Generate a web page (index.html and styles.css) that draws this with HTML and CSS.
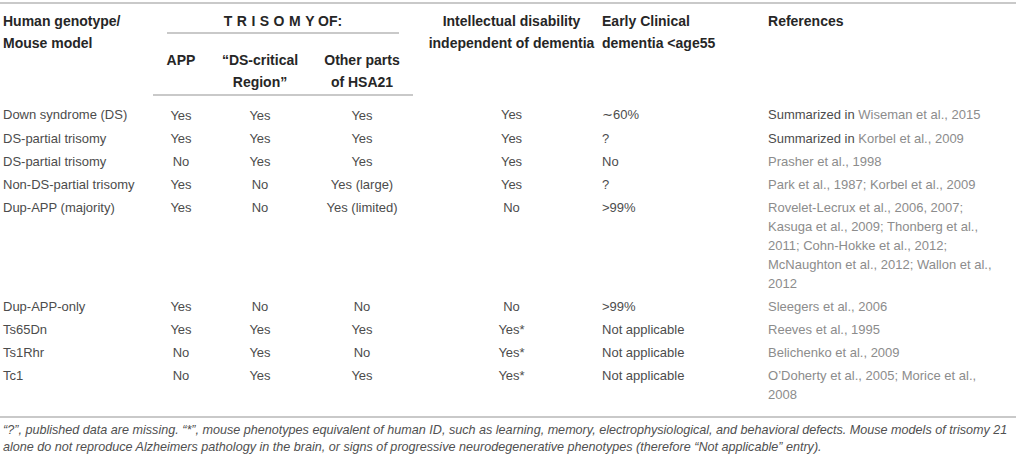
FILE: index.html
```html
<!DOCTYPE html>
<html lang="en">
<head>
  <meta charset="UTF-8">
  <title>Trisomy 21 genotypes and mouse models</title>
  <link rel="stylesheet" href="styles.css">
</head>
<body>
  <table class="trisomy">
    <colgroup>
      <col class="c-model">
      <col class="c-app">
      <col class="c-dscr">
      <col class="c-other">
      <col class="c-id">
      <col class="c-early">
      <col class="c-refs">
    </colgroup>
    <thead>
      <tr class="head-top">
        <th rowspan="2" class="left">Human genotype/<br>Mouse model</th>
        <th colspan="3" class="group"><div class="group-line"><span class="spaced">TRISOM</span>Y OF:</div></th>
        <th rowspan="2" class="idcol">Intellectual disability<br>independent of dementia</th>
        <th rowspan="2" class="left">Early Clinical<br>dementia &lt;age55</th>
        <th rowspan="2" class="left refs">References</th>
      </tr>
      <tr class="head-sub">
        <th>APP</th>
        <th>“DS-critical<br>Region”</th>
        <th>Other parts<br>of HSA21</th>
      </tr>
    </thead>
    <tbody>
      <tr>
        <td>Down syndrome (DS)</td><td>Yes</td><td>Yes</td><td>Yes</td><td class="idcol">Yes</td><td>∼60%</td>
        <td class="refs"><span class="dark">Summarized in</span> Wiseman et al., 2015</td>
      </tr>
      <tr>
        <td>DS-partial trisomy</td><td>Yes</td><td>Yes</td><td>Yes</td><td class="idcol">Yes</td><td>?</td>
        <td class="refs"><span class="dark">Summarized in</span> Korbel et al., 2009</td>
      </tr>
      <tr>
        <td>DS-partial trisomy</td><td>No</td><td>Yes</td><td>Yes</td><td class="idcol">Yes</td><td>No</td>
        <td class="refs">Prasher et al., 1998</td>
      </tr>
      <tr>
        <td>Non-DS-partial trisomy</td><td>Yes</td><td>No</td><td>Yes (large)</td><td class="idcol">Yes</td><td>?</td>
        <td class="refs">Park et al., 1987; Korbel et al., 2009</td>
      </tr>
      <tr>
        <td>Dup-APP (majority)</td><td>Yes</td><td>No</td><td>Yes (limited)</td><td class="idcol">No</td><td>&gt;99%</td>
        <td class="refs">Rovelet-Lecrux et al., 2006, 2007; Kasuga et al., 2009; Thonberg et al., 2011; Cohn-Hokke et al., 2012; McNaughton et al., 2012; Wallon et al., 2012</td>
      </tr>
      <tr>
        <td>Dup-APP-only</td><td>Yes</td><td>No</td><td>No</td><td class="idcol">No</td><td>&gt;99%</td>
        <td class="refs">Sleegers et al., 2006</td>
      </tr>
      <tr>
        <td>Ts65Dn</td><td>Yes</td><td>Yes</td><td>Yes</td><td class="idcol">Yes*</td><td>Not applicable</td>
        <td class="refs">Reeves et al., 1995</td>
      </tr>
      <tr>
        <td>Ts1Rhr</td><td>No</td><td>Yes</td><td>No</td><td class="idcol">Yes*</td><td>Not applicable</td>
        <td class="refs">Belichenko et al., 2009</td>
      </tr>
      <tr>
        <td>Tc1</td><td>No</td><td>Yes</td><td>Yes</td><td class="idcol">Yes*</td><td>Not applicable</td>
        <td class="refs">O’Doherty et al., 2005; Morice et al., 2008</td>
      </tr>
    </tbody>
  </table>

  <p class="note">“?”, published data are missing. “*”, mouse phenotypes equivalent of human ID, such as learning, memory, electrophysiological, and behavioral defects. Mouse models of trisomy 21<br>alone do not reproduce Alzheimers pathology in the brain, or signs of progressive neurodegenerative phenotypes (therefore “Not applicable” entry).</p>
</body>
</html>
```

FILE: styles.css
```css
body {
  margin: 0;
  padding-top: 2px;
  background: #fff;
  font-family: "Liberation Sans", Arial, sans-serif;
  color: #4c4c4c;
}

.trisomy {
  width: 1016px;
  table-layout: fixed;
  border-collapse: collapse;
  border-top: 2px solid #c9c9c9;
  border-bottom: 2px solid #c9c9c9;
  font-size: 13px;
}

.c-model { width: 153px; }
.c-app { width: 56px; }
.c-dscr { width: 102px; }
.c-other { width: 102px; }
.c-id { width: 189px; }
.c-early { width: 166px; }
.c-refs { width: 248px; }

/* header */
th {
  font-size: 14px;
  font-weight: bold;
  color: #262626;
  line-height: 22px;
  padding: 0;
  text-align: center;
  vertical-align: top;
}
th.left { text-align: left; }
thead tr:last-child th { border-bottom: 2px solid #c9c9c9; }
.head-top th { padding-top: 6px; }
.head-top th:first-child { padding-left: 3px; }
.head-sub th { padding-top: 15px; padding-bottom: 1px; }
.group-line {
  margin: 0 14px;
  border-bottom: 2px solid #c9c9c9;
}
.spaced { letter-spacing: 0.32em; }
th.idcol { padding-left: 8px; }

/* body */
td {
  line-height: 19px;
  padding: 2px 0;
  text-align: center;
  vertical-align: top;
}
td:first-child { text-align: left; padding-left: 3px; }
td:nth-child(6), td:nth-child(7) { text-align: left; }
td.idcol { padding-left: 8px; }
td.refs { color: #8c8c8c; padding-right: 8px; }
.dark { color: #4c4c4c; }
tbody tr:first-child td { padding-top: 10px; }
tbody tr:last-child td { padding-bottom: 12px; }

.note {
  margin: 0;
  padding: 4px 0 0 3px;
  font-size: 12.6px;
  font-style: italic;
  line-height: 17px;
  color: #505050;
  white-space: nowrap;
}
```
